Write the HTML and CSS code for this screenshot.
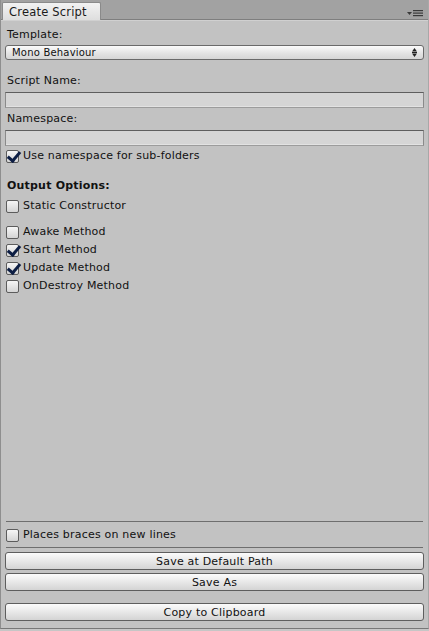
FILE: index.html
```html
<!DOCTYPE html>
<html lang="en">
<head>
  <meta charset="UTF-8" />
  <title>Create Script</title>
  <link rel="stylesheet" href="styles.css">
</head>
<body>
  <div class="window">
    <div class="tabbar">
      <div class="tab">Create Script</div>
      <svg class="menu-icon" width="17" height="7" viewBox="0 0 17 7">
        <path d="M0 2h5l-2.5 3z" fill="#3a3a3a"/>
        <rect x="6" y="0" width="10" height="1.2" fill="#3a3a3a"/>
        <rect x="6" y="2.5" width="10" height="1.2" fill="#3a3a3a"/>
        <rect x="6" y="5" width="10" height="1.2" fill="#3a3a3a"/>
      </svg>
    </div>

    <div class="panel">
      <div class="label first">Template:</div>
      <div class="popup">
        <span>Mono Behaviour</span>
        <svg width="5" height="9" viewBox="0 0 5 9">
          <path d="M0 3.5h5L2.5 0z" fill="#222"/>
          <rect x="0" y="4" width="5" height="1" fill="#222"/>
          <path d="M0 5.5h5L2.5 9z" fill="#222"/>
        </svg>
      </div>

      <div class="label gap">Script Name:</div>
      <div class="field"></div>

      <div class="label near">Namespace:</div>
      <div class="field"></div>

      <label class="check-row near">
        <span class="box checked"></span>Use namespace for sub-folders
      </label>

      <div class="label bold section">Output Options:</div>
      <label class="check-row sm">
        <span class="box"></span>Static Constructor
      </label>

      <label class="check-row lg">
        <span class="box"></span>Awake Method
      </label>
      <label class="check-row">
        <span class="box checked"></span>Start Method
      </label>
      <label class="check-row">
        <span class="box checked"></span>Update Method
      </label>
      <label class="check-row">
        <span class="box"></span>OnDestroy Method
      </label>

      <div class="spacer"></div>

      <div class="sep"></div>
      <label class="check-row braces">
        <span class="box"></span>Places braces on new lines
      </label>
      <div class="sep after"></div>

      <button class="btn first-btn">Save at Default Path</button>
      <button class="btn">Save As</button>
      <button class="btn copy">Copy to Clipboard</button>
    </div>
  </div>
</body>
</html>
```

FILE: styles.css
```css
* {
  box-sizing: border-box;
  margin: 0;
  padding: 0;
}

body {
  font-family: "DejaVu Sans", Verdana, sans-serif;
  font-size: 11px;
  letter-spacing: 0.2px;
  color: #111;
  background: #c6c6c6;
  width: 429px;
  height: 631px;
  overflow: hidden;
}

.window {
  height: 629px;
  display: flex;
  flex-direction: column;
  border-left: 1px solid #8e8e8e;
  border-right: 1px solid #a8a8a8;
  border-bottom: 1px solid #777;
}

/* top tab strip */
.tabbar {
  height: 20px;
  flex: none;
  background: #a2a2a2;
  border-bottom: 1px solid #7e7e7e;
  position: relative;
  display: flex;
  align-items: flex-end;
  padding-left: 1px;
}

.tab {
  width: 99px;
  height: 18px;
  margin-bottom: -1px;
  padding: 2px 0 0 6px;
  background: linear-gradient(#f2f2f2, #dedede);
  border: 1px solid #8a8a8a;
  border-bottom: none;
  border-radius: 2px 2px 0 0;
  color: #1a1a1a;
  font-size: 11.5px;
  line-height: 14px;
}

.menu-icon {
  position: absolute;
  right: 4px;
  top: 10px;
}

.panel {
  flex: 1;
  display: flex;
  flex-direction: column;
  padding: 0 4px 7px 4px;
  background: #c2c2c2;
  border-top: 1px solid #d0d0d0;
}

.label {
  height: 14px;
  line-height: 14px;
  padding-left: 2px;
  color: #111;
}

.label.first { margin-top: 7px; }
.label.gap { margin-top: 14px; }
.label.near { margin-top: 4px; }
.label.section { margin-top: 16px; }
.bold { font-weight: bold; }

.popup {
  margin-top: 3px;
  height: 15px;
  border: 1px solid #6a6a6a;
  border-radius: 3px;
  background: linear-gradient(#fbfbfb, #e2e2e2 60%, #d6d6d6);
  display: flex;
  align-items: center;
  justify-content: space-between;
  padding: 0 6px 0 6px;
  font-size: 10px;
  color: #111;
}

.field {
  margin-top: 4px;
  height: 16px;
  background: #d5d5d5;
  border-top: 1px solid #5e5e5e;
  border-left: 1px solid #8a8a8a;
  border-right: 1px solid #8a8a8a;
  border-bottom: 1px solid #9c9c9c;
  box-shadow: inset 0 -1px 0 #e2e2e2;
}

.check-row {
  height: 14px;
  margin-top: 4px;
  display: flex;
  align-items: center;
  padding-left: 1px;
  line-height: 14px;
}

.check-row.near { margin-top: 3px; }
.check-row.sm { margin-top: 6px; }
.check-row.lg { margin-top: 12px; }

.box {
  width: 13px;
  height: 13px;
  margin-right: 4px;
  border: 1px solid #5c5c5c;
  border-radius: 2px;
  background: linear-gradient(#f6f6f6, #d4d4d4);
  position: relative;
  flex: none;
}

.box.checked::after {
  content: "";
  position: absolute;
  left: 3px;
  top: -2px;
  width: 5px;
  height: 10px;
  border-right: 3px solid #0d1e44;
  border-bottom: 3px solid #0d1e44;
  transform: rotate(40deg);
}

.spacer { flex: 1; }

.sep {
  height: 1px;
  background: #6e6e6e;
  margin: 0 1px;
}

.check-row.braces { margin-top: 6px; }
.sep.after { margin-top: 5px; }

.btn {
  font-family: inherit;
  font-size: 11px;
  letter-spacing: 0.2px;
  color: #111;
  height: 18px;
  margin-top: 3px;
  border: 1px solid #5e5e5e;
  border-radius: 3px;
  background: linear-gradient(#fbfbfb, #e6e6e6 55%, #d4d4d4);
  text-align: center;
  line-height: 15px;
}

.btn.first-btn { margin-top: 4px; }
.btn.copy { margin-top: 12px; }
```
